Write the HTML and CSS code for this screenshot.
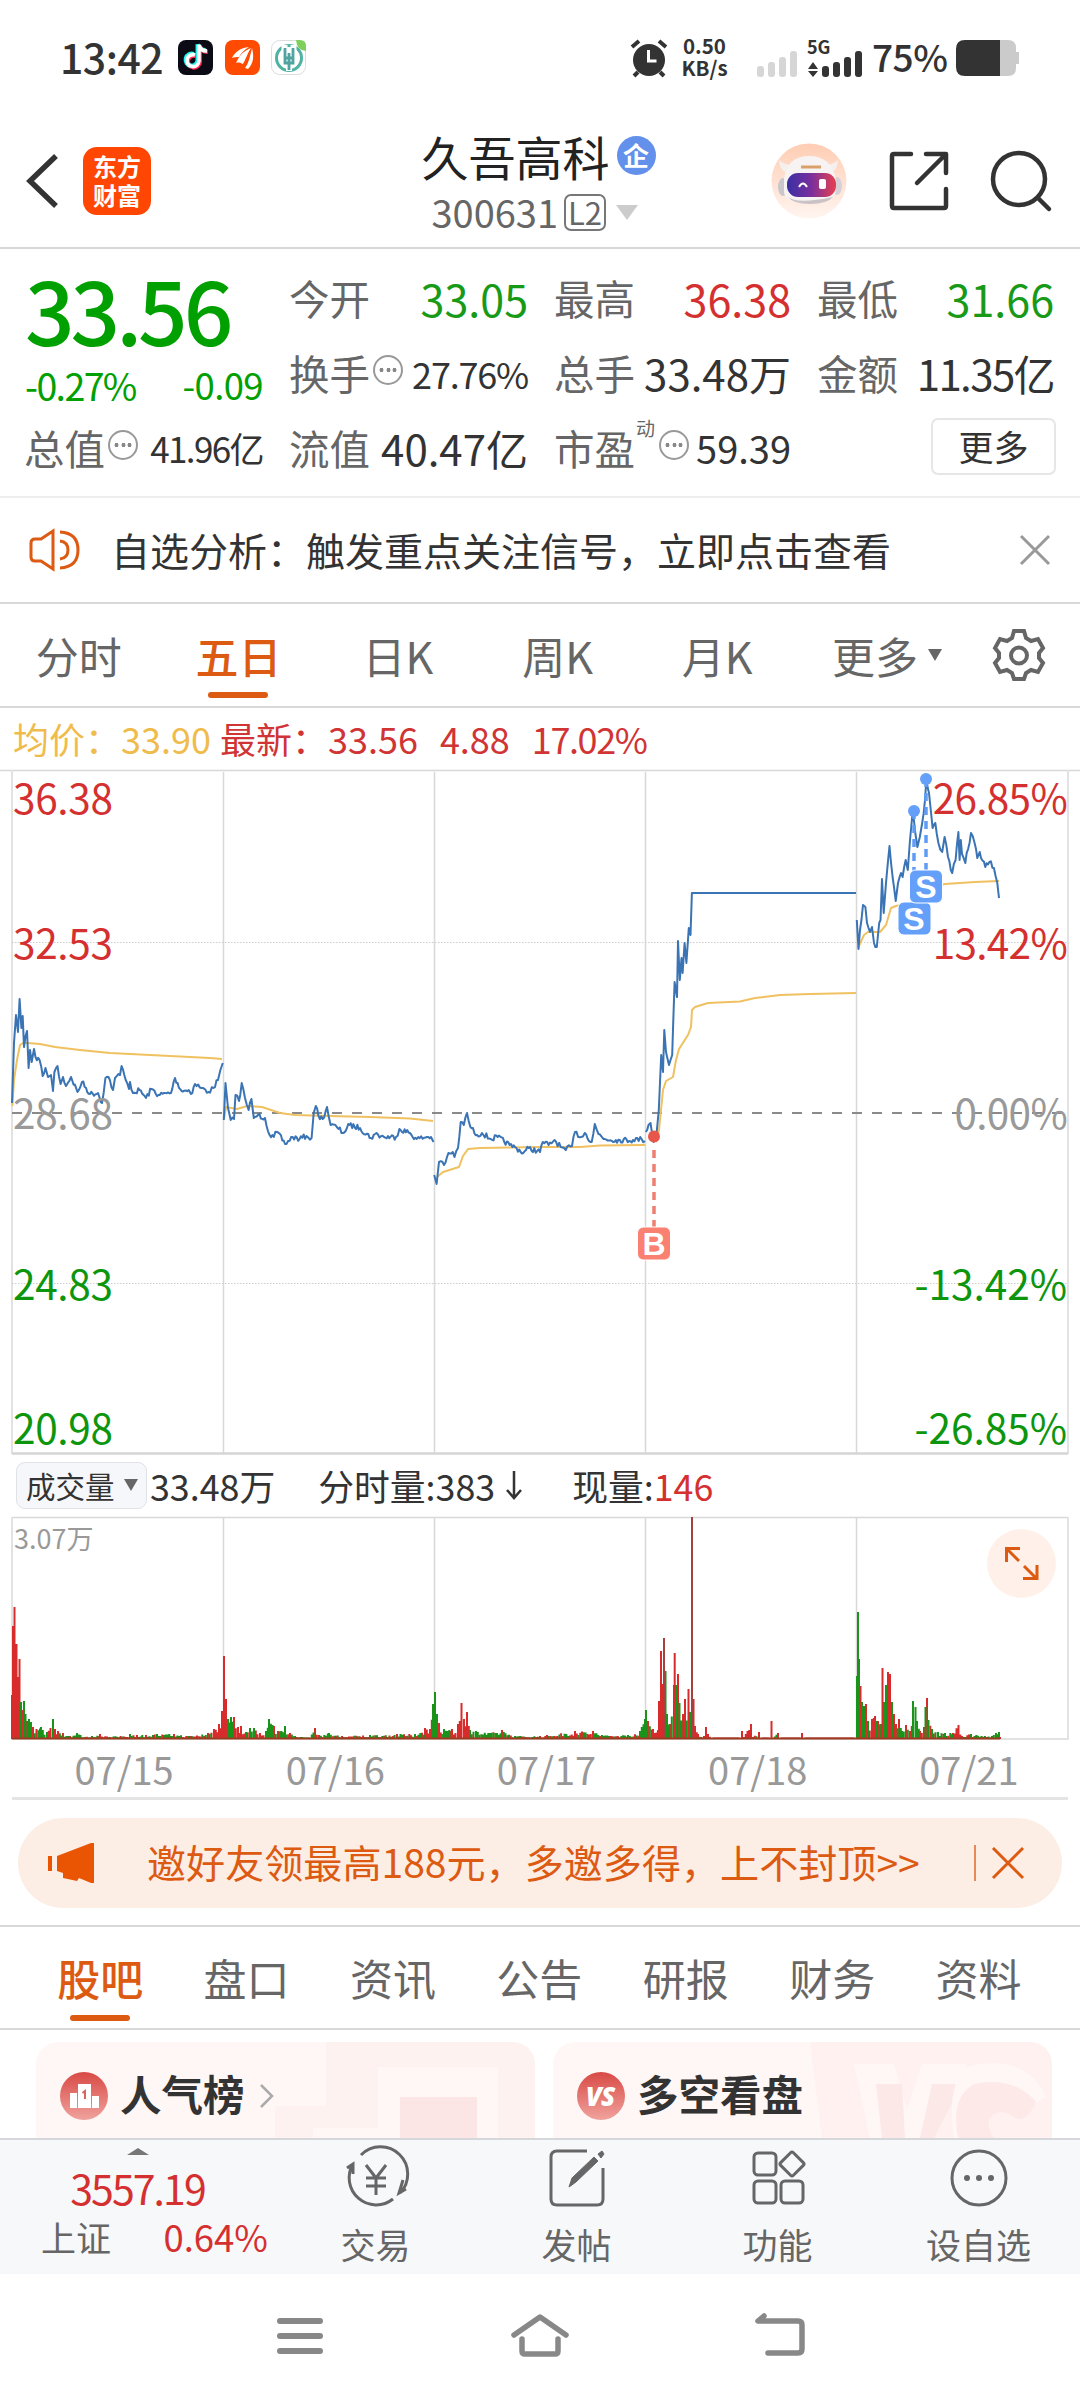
FILE: index.html
```html
<!DOCTYPE html>
<html lang="zh-CN">
<head>
  <meta charset="UTF-8">
  <title>久吾高科 300631</title>
  <link rel="stylesheet" href="styles.css">
</head>
<body>
  <!-- Status bar -->
  <div class="status-bar">
    <div class="clock">13:42</div>
    <svg class="app-icons" width="130" height="36" viewBox="0 0 130 36">
      <rect width="35" height="35" rx="8" fill="#0b0b15"/>
      <g fill="none" stroke-width="4.5">
        <path d="M17 15a6 6 0 1 0 4 6V5c1 4 4 6 8 6" stroke="#fe2c55" transform="translate(.8 .8)"/>
        <path d="M17 15a6 6 0 1 0 4 6V5c1 4 4 6 8 6" stroke="#25f4ee" transform="translate(-1.2 -.8)"/>
        <path d="M17 15a6 6 0 1 0 4 6V5c1 4 4 6 8 6" stroke="#fff" stroke-width="3.6"/>
      </g>
      <rect x="47" width="35" height="35" rx="8" fill="#ff4a02"/>
      <path d="M54 18c3-6 8-10 17-11-5 3-8 6-10 10-3 0-5 0-7 1zM58 23c3-7 7-12 15-15-4 6-5 11-8 16-2-1-5-2-7-1zM67 28c4-5 5-12 7-20 2 8 2 15-4 21z" fill="#fff"/>
      <rect x="93.500" y=".5" width="34" height="34" rx="8" fill="#fff" stroke="#ddd"/>
      <circle cx="111" cy="18" r="12.500" fill="none" stroke="#4fb3a4" stroke-width="3"/>
      <path d="M106.500 5v10h9V5M111 15v16" fill="none" stroke="#fff" stroke-width="6"/>
      <path d="M107 8v15h8V8M111 13v17M107 18h8" fill="none" stroke="#4fa3a0" stroke-width="2.800"/>
      <path d="M118 0h4q6 0 6 6v5q-9 0-10-11z" fill="#7ed05a"/>
    </svg>
    <svg class="alarm" width="38" height="38" viewBox="0 0 38 38">
      <circle cx="19" cy="21" r="16" fill="#333"/>
      <path d="M2 8l7-6M36 8l-7-6M8 33l-4 4M30 33l4 4" stroke="#333" stroke-width="4"/>
      <path d="M18.500 11v11h8" fill="none" stroke="#fff" stroke-width="3"/>
    </svg>
    <div class="net-speed">0.50<br>KB/s</div>
    <svg class="signal" width="108" height="38" viewBox="0 0 108 38">
      <g fill="#d6d6d6">
        <rect x="0" y="27" width="7" height="11" rx="3"/><rect x="11" y="23" width="7" height="15" rx="3"/>
        <rect x="22" y="18" width="7" height="20" rx="3"/><rect x="33" y="12" width="7" height="26" rx="3"/>
      </g>
      <g fill="#333">
        <path d="M51 30l5-7 5 7zM51 32l5 6 5-6z"/>
        <rect x="65" y="27" width="7" height="11" rx="3"/><rect x="76" y="23" width="7" height="15" rx="3"/>
        <rect x="87" y="18" width="7" height="20" rx="3"/><rect x="98" y="12" width="7" height="26" rx="3"/>
      </g>
      <text x="50" y="15" class="net-type">5G</text>
    </svg>
    <div class="battery-text">75%</div>
    <svg class="battery" width="63" height="36" viewBox="0 0 63 36">
      <path d="M44 0h8q8 0 8 8v4h3v12h-3v4q0 8-8 8h-8z" fill="#cbcbcb"/>
      <path d="M44 0H9Q0 0 0 9v18q0 9 9 9h35z" fill="#333"/>
    </svg>
  </div>

  <!-- Header -->
  <div class="header">
    <div class="header-left">
      <svg width="36" height="56" viewBox="0 0 36 56"><path d="M31 3L5 28l26 25" fill="none" stroke="#333" stroke-width="5.500"/></svg>
      <div class="brand">东方<br>财富</div>
    </div>
    <div class="header-title">
      <div class="stock-name">久吾高科<span class="tag-qi">企</span></div>
      <div class="stock-code">300631<span class="tag-l2">L2</span><i class="tri-down"></i></div>
    </div>
    <div class="header-right">
      <svg width="76" height="76" viewBox="0 0 76 76">
        <defs>
          <linearGradient id="peach" x2="0" y2="1"><stop offset="0" stop-color="#ffcdb3"/><stop offset="1" stop-color="#fff5f0"/></linearGradient>
          <linearGradient id="visor"><stop offset="0" stop-color="#3a2fa5"/><stop offset=".5" stop-color="#7a2f9c"/><stop offset="1" stop-color="#e8404f"/></linearGradient>
        </defs>
        <circle cx="38" cy="38" r="37.500" fill="url(#peach)"/>
        <path d="M8 17q1 13 11 13l5-8q-10 1-16-5zM67 17q-1 13-10 13l-5-8q9 1 15-5z" fill="#f5efee"/>
        <ellipse cx="12" cy="44" rx="5" ry="9" fill="#c9c6cc"/><ellipse cx="66" cy="43" rx="5" ry="9" fill="#d5d1d6"/>
        <path d="M13 36Q16 13 38 13t27 23v10q0 14-27 14T13 46z" fill="#f7f3f3"/>
        <path d="M16 53q8 9 46 1-6 7-23 7t-23-8z" fill="#c9c2c6"/>
        <rect x="16" y="30" width="49" height="24" rx="11" fill="url(#visor)"/>
        <path d="M28 44q4-7 8 0" fill="none" stroke="#fff" stroke-width="2"/><rect x="48" y="36" width="7" height="10" rx="2" fill="#fff"/>
        <path d="M30 24h20" stroke="#d9a06a" stroke-width="3"/>
      </svg>
      <svg width="60" height="60" viewBox="0 0 60 60" fill="none" stroke="#333" stroke-width="4.500" stroke-linecap="round" stroke-linejoin="round">
        <path d="M22 3H5q-2 0-2 2v50q0 2 2 2h50q2 0 2-2V38M37 3h20v19M56 4L28 32"/>
      </svg>
      <svg width="60" height="60" viewBox="0 0 60 60" fill="none" stroke="#333" stroke-width="4.500" stroke-linecap="round">
        <circle cx="28" cy="28" r="26"/><path d="M47 47l11 11"/>
      </svg>
    </div>
  </div>

  <!-- Quote -->
  <div class="quote">
    <div class="price-box">
      <div class="price">33.56</div>
      <div class="change"><span>-0.27%</span><span>-0.09</span></div>
    </div>
    <div class="cell"><label>今开</label><b class="green">33.05</b></div>
    <div class="cell"><label>最高</label><b class="red">36.38</b></div>
    <div class="cell"><label>最低</label><b class="green">31.66</b></div>
    <div class="cell"><label>换手</label><i class="info"></i><b class="small">27.76%</b></div>
    <div class="cell"><label>总手</label><b>33.48万</b></div>
    <div class="cell"><label>金额</label><b class="tight">11.35亿</b></div>
    <div class="cell"><label>总值</label><i class="info"></i><b class="small cap">41.96亿</b></div>
    <div class="cell"><label>流值</label><b>40.47亿</b></div>
    <div class="cell"><label>市盈<sup>动</sup></label><i class="info pe"></i><b class="mid">59.39</b></div>
    <div class="cell"><button class="more-btn">更多</button></div>
  </div>

  <!-- Notice -->
  <div class="notice">
    <svg width="52" height="44" viewBox="0 0 52 44" fill="none" stroke="#dc5a12" stroke-width="3">
      <path d="M24 3v38L12 33H6q-4 0-4-4V15q0-4 4-4h6zM31 4q18 1 18 18T31 40M31 13q8 1 8 9t-8 9"/>
    </svg>
    <span>自选分析：触发重点关注信号，立即点击查看</span>
    <svg width="30" height="30" viewBox="0 0 30 30"><path d="M1 1l28 28M29 1L1 29" stroke="#999" stroke-width="3"/></svg>
  </div>

  <!-- Chart tabs -->
  <div class="chart-tabs">
    <div>分时</div>
    <div class="active">五日</div>
    <div>日K</div>
    <div>周K</div>
    <div>月K</div>
    <div class="more-tab">更多<i></i></div>
    <svg width="52" height="52" viewBox="0 0 52 52" fill="none" stroke="#666" stroke-width="4">
      <path d="M21 2h10l2 7 5 3 7-2 5 9-4 5v5l4 5-5 9-7-2-5 3-2 6H21l-2-6-5-3-7 2-5-9 4-5v-5l-4-5 5-9 7 2 5-3z"/><circle cx="26" cy="26.500" r="8"/>
    </svg>
  </div>

  <div class="legend">
    <span class="avg">均价：33.90</span>
    <span>最新：33.56</span>
    <span>4.88</span>
    <span class="pct">17.02%</span>
  </div>

  <!-- Five-day price chart -->
  <svg class="price-chart" width="1080" height="684" viewBox="0 0 1080 684">
    <path class="grid" d="M0 .5H1080M223.500 2V684M434.500 2V684M645.500 2V684M856.500 2V684"/>
    <path class="frame" d="M12 0V684M1068 0V684"/>
    <path d="M12 683.500H1068" stroke="#d5d5d5" stroke-width="2.500"/>
    <path class="dotted" d="M12 172.500H1068M12 513.500H1068"/>
    <path d="M12 343H1068" stroke="#8a8a8a" stroke-width="2" stroke-dasharray="10 10"/>
    <g id="avgLines" class="avg-line"></g>
    <g id="priceLines" class="price-line"></g>
    <g class="axis">
      <text class="up" x="13" y="44">36.38</text>
      <text class="up" x="13" y="189">32.53</text>
      <text class="flat" x="13" y="359">28.68</text>
      <text class="down" x="13" y="530">24.83</text>
      <text class="down" x="13" y="674">20.98</text>
    </g>
    <g class="axis right">
      <text class="up" x="1067" y="44">26.85%</text>
      <text class="up" x="1067" y="189">13.42%</text>
      <text class="flat" x="1067" y="359">0.00%</text>
      <text class="down" x="1067" y="530">-13.42%</text>
      <text class="down" x="1067" y="674">-26.85%</text>
    </g>
    <!-- buy / sell marks -->
    <g class="mark sell">
      <path d="M914 41V132M926 9V100"/>
      <circle cx="914" cy="41" r="6"/><circle cx="926" cy="9" r="6"/>
      <rect x="898" y="132" width="33" height="33" rx="6"/><rect x="909.500" y="100" width="33" height="33" rx="6"/>
      <text x="914" y="160">S</text><text x="926" y="128">S</text>
    </g>
    <g class="mark buy">
      <path d="M654 380V457"/>
      <circle cx="654" cy="366.500" r="6"/>
      <rect x="637.500" y="457" width="33" height="33" rx="6"/>
      <text x="654" y="485">B</text>
    </g>
  </svg>

  <!-- Volume -->
  <div class="volume-head">
    <div class="volume-select">成交量<i></i></div>
    <span class="total">33.48万</span>
    <span class="minute">分时量:383<svg width="18" height="30" viewBox="0 0 18 30"><path d="M9 1v26M2 20l7 8 7-8" fill="none" stroke="#333" stroke-width="2.500"/></svg></span>
    <span>现量:<em>146</em></span>
  </div>
  <svg class="volume-chart" width="1080" height="223" viewBox="0 0 1080 223">
    <path class="grid" d="M12 .5H1068M223.500 0V222M434.500 0V222M645.500 0V222M856.500 0V222"/>
    <path class="frame" d="M12 0V222H1068V0"/>
    <text x="14" y="32" class="vol-max">3.07万</text>
    <g id="volumeBars"></g>
    <circle cx="1021.500" cy="46.500" r="34.500" fill="#fff1e9"/>
    <path d="M1006.500 45V31.500H1020M1007 32l12 12M1037 48V61.500H1023M1036 61l-12-12" fill="none" stroke="#dc5a12" stroke-width="3"/>
  </svg>
  <div class="dates">
    <span>07/15</span><span>07/16</span><span>07/17</span><span>07/18</span><span>07/21</span>
  </div>

  <!-- Invite banner -->
  <div class="banner">
    <svg width="48" height="42" viewBox="0 0 48 42" fill="#ea5504"><path d="M0 14h4v15H0zM9 14L43 1h3v40h-3l-12-5-2 3-14-3V31l-6-2z"/></svg>
    <span>邀好友领最高188元，多邀多得，上不封顶&gt;&gt;</span>
    <i class="divider"></i>
    <svg width="32" height="32" viewBox="0 0 32 32"><path d="M1 1l30 30M31 1L1 31" stroke="#dc5a12" stroke-width="3"/></svg>
  </div>

  <!-- Info tabs -->
  <div class="info-tabs">
    <div class="active">股吧</div>
    <div>盘口</div>
    <div>资讯</div>
    <div>公告</div>
    <div>研报</div>
    <div>财务</div>
    <div>资料</div>
  </div>

  <div class="cards">
    <div class="card">
      <svg class="card-bg" width="260" height="96" viewBox="0 0 260 96">
        <path d="M51 0h209v96H0V64h51z" fill="#fef2f1"/><path d="M103 25h120v71H38V86h65z" fill="#fff7f5"/><path d="M125 55h77v41h-77z" fill="#fce6e5"/>
      </svg>
      <svg width="48" height="48" viewBox="0 0 48 48">
        <defs><linearGradient id="redBall" x2="0" y2="1"><stop offset="0" stop-color="#d84a45"/><stop offset="1" stop-color="#f0a29d"/></linearGradient></defs>
        <circle cx="24" cy="24" r="24" fill="url(#redBall)"/>
        <path d="M10 21h7v15h-7zM18 12h13v24H18zM32 24h7v12h-7z" fill="#fff"/><path d="M22.500 21l2.500-2v8" fill="none" stroke="#d8645f" stroke-width="2"/>
      </svg>
      <h3>人气榜</h3>
      <svg class="chevron" width="16" height="24" viewBox="0 0 16 24"><path d="M2 1l11 11L2 23" fill="none" stroke="#aaa" stroke-width="2.500"/></svg>
    </div>
    <div class="card">
      <svg class="card-bg" width="246" height="96" viewBox="0 0 246 96">
        <path d="M4 0h242v96H16z" fill="#fef1f0"/><path d="M48 22h40l13 44 15-44h45l-34 74H64z" fill="#fff7f5"/><path d="M70 42h26l3 54H76zM126 42h30l-28 54H114z" fill="#fce8e7"/>
        <path d="M160 25q60-15 80 30l-15 10q-10-17-28-15-24 3-24 30v16h-25q-8-50 12-71z" fill="#fff7f5"/>
        <path d="M168 42q40-8 62 18-8 20-20 16-16-12-26 0-4 10 4 20h-36q-8-40 16-54z" fill="#fde9e8"/>
      </svg>
      <svg width="48" height="48" viewBox="0 0 48 48"><circle cx="24" cy="24" r="24" fill="url(#redBall)"/><text x="23" y="34" class="vs">VS</text></svg>
      <h3>多空看盘</h3>
    </div>
  </div>

  <!-- Bottom toolbar -->
  <div class="toolbar">
    <div class="index-box">
      <i class="tri-up"></i>
      <div class="index-value">3557.19</div>
      <div class="index-row"><span>上证</span><em>0.64%</em></div>
    </div>
    <div class="tool">
      <svg width="66" height="60" viewBox="0 0 66 60" fill="none" stroke="#666" stroke-width="3">
        <path d="M18 7a27 27 0 0 1 39 38M60 32l-4 13 7-4M50 51A27 27 0 0 1 10 16M4 20l6-4v10M23 17l10 13 10-13M33 30v17M23 30h20M23 38h20"/>
      </svg>
      <span>交易</span>
    </div>
    <div class="tool">
      <svg width="58" height="60" viewBox="0 0 58 60" fill="none" stroke="#666" stroke-width="3">
        <path d="M39 3H9Q3 3 3 9v42q0 6 6 6h40q6 0 6-6V20"/><path d="M21 39l3-9L46 9l4 4-22 21zM50 6l4-3 2 3-3 4z" fill="#666" stroke-width="1"/>
      </svg>
      <span>发帖</span>
    </div>
    <div class="tool">
      <svg width="54" height="60" viewBox="0 0 54 60" fill="none" stroke="#666" stroke-width="3">
        <rect x="3" y="5" width="22" height="22" rx="4"/><rect x="3" y="33" width="22" height="22" rx="4"/><rect x="30" y="33" width="22" height="22" rx="4"/>
        <rect x="32" y="7" width="18" height="18" rx="2" transform="rotate(45 41 16)"/>
      </svg>
      <span>功能</span>
    </div>
    <div class="tool">
      <svg width="60" height="60" viewBox="0 0 60 60"><circle cx="30" cy="30" r="27" fill="none" stroke="#666" stroke-width="3"/><g fill="#666"><circle cx="18" cy="30" r="3"/><circle cx="30" cy="30" r="3"/><circle cx="42" cy="30" r="3"/></g></svg>
      <span>设自选</span>
    </div>
  </div>

  <!-- System navigation -->
  <div class="sys-nav">
    <svg width="60" height="46" viewBox="0 0 60 46"><path d="M10 8h40M10 23h40M10 38h40" stroke="#888" stroke-width="6" stroke-linecap="round"/></svg>
    <svg width="60" height="46" viewBox="0 0 60 46" fill="none" stroke="#888" stroke-width="5.500" stroke-linecap="round" stroke-linejoin="round"><path d="M4 22L30 4l26 18M12 26v12q0 3 3 3h30q3 0 3-3V26"/></svg>
    <svg width="60" height="46" viewBox="0 0 60 46" fill="none" stroke="#888" stroke-width="5.500" stroke-linecap="round" stroke-linejoin="round"><path d="M15 3L9 8h40q4 0 4 4v24q0 4-4 4H19"/></svg>
  </div>

  <script src="chart.js"></script>
</body>
</html>
```
FILE: styles.css
```css
* { box-sizing: border-box; }

body {
  width: 1080px;
  height: 2400px;
  margin: 0;
  overflow: hidden;
  background: #fff;
  color: #333;
  font-family: "Noto Sans CJK SC", "Noto Sans", sans-serif;
}

i, em { font-style: normal; }
svg { display: block; flex: none; overflow: visible; }

/* status bar */
.status-bar {
  display: flex;
  align-items: center;
  height: 115px;
  padding-left: 60px;
  line-height: 1;
}

.clock {
  width: 118px;
  padding-bottom: 3px;
  font-size: 41px;
  font-weight: 500;
  letter-spacing: -0.5px;
}

.app-icons { margin-right: 322px; }

.net-speed {
  width: 51px;
  margin-left: 11px;
  padding-bottom: 3px;
  font-size: 20.5px;
  line-height: 22px;
  font-weight: 700;
  text-align: center;
}

.signal { margin-left: 27px; }

.net-type {
  font-size: 18px;
  font-weight: 700;
  fill: #333;
}

.battery-text {
  width: 84px;
  margin-left: 7px;
  padding-bottom: 3px;
  font-size: 37px;
  font-weight: 500;
  letter-spacing: -0.5px;
}

/* header */
.header {
  display: flex;
  position: relative;
  justify-content: space-between;
  height: 134px;
  border-bottom: 2px solid #d8d8d8;
}

.header-left {
  display: flex;
  align-items: center;
  gap: 22px;
  padding-left: 25px;
}

.brand {
  width: 68px;
  height: 68px;
  padding-top: 4px;
  border-radius: 14px;
  background: #ff4602;
  color: #fff;
  font-size: 24px;
  line-height: 29px;
  font-weight: 700;
  text-align: center;
}

.header-title {
  display: flex;
  flex-direction: column;
  align-items: flex-start;
  padding: 12px 0 0 155px;
}

.stock-name {
  display: flex;
  align-items: center;
  height: 57px;
  color: #222;
  font-size: 47px;
  line-height: 57px;
}

.tag-qi {
  width: 39px;
  height: 39px;
  margin-left: 7px;
  border-radius: 50%;
  background: #6390ea;
  color: #fff;
  font-size: 26px;
  line-height: 37px;
  font-weight: 700;
  text-align: center;
}

.stock-code {
  display: flex;
  align-items: center;
  margin-left: 10px;
  color: #666;
  font-size: 38px;
  line-height: 56px;
}

.tag-l2 {
  width: 42px;
  height: 37px;
  margin-left: 6px;
  border: 2px solid #777;
  border-radius: 7px;
  font-size: 31px;
  line-height: 31px;
  text-align: center;
}

.tri-down {
  margin-left: 10px;
  border: 11px solid transparent;
  border-top: 15px solid #ccc;
  border-bottom: 0;
}

.header-right {
  display: flex;
  align-items: center;
  gap: 42px;
  padding-right: 29px;
}

/* quote */
.quote {
  display: grid;
  grid-template-columns: 238px 238px 236px 236px;
  grid-template-rows: 75px 75px 74px;
  column-gap: 27px;
  height: 249px;
  padding: 11px 0 0 25px;
  border-bottom: 2px solid #eee;
}

.price-box {
  grid-row: span 2;
  color: #00a000;
}

.price {
  height: 95px;
  margin-top: 1px;
  font-size: 87px;
  line-height: 95px;
  font-weight: 500;
  letter-spacing: -4px;
}

.change {
  display: flex;
  justify-content: space-between;
  margin-top: 4px;
  font-size: 36.5px;
  line-height: 50px;
  letter-spacing: -0.6px;
}

.change span:first-child { letter-spacing: -1.6px; word-spacing: 0; font-size: 37.5px; }

.cell {
  display: flex;
  align-items: center;
  justify-content: space-between;
  margin-left: -1px;
  white-space: nowrap;
}

.cell label {
  position: relative;
  color: #666;
  font-size: 40.5px;
}

.cell b {
  font-size: 42px;
  font-weight: 400;
}

.cell b.green, .cell b.red { font-size: 43px; }

.cell b.small {
  font-size: 36px;
  letter-spacing: -1.2px;
}

.cell b.small.cap { font-size: 35px; letter-spacing: -1.6px; }
.cell b.tight { letter-spacing: -1.6px; }
.cell b.mid { font-size: 38px; }

.cell .green { color: #189a18; }
.cell .red { color: #d53030; }

.cell sup {
  position: absolute;
  top: -4px;
  left: 82px;
  font-size: 19px;
}

.info {
  width: 30px;
  height: 30px;
  margin: -5px auto 0 3px;
  border: 2px solid #999;
  border-radius: 50%;
  background-image:
    radial-gradient(circle, #888 1.8px, transparent 2.2px),
    radial-gradient(circle, #888 1.8px, transparent 2.2px),
    radial-gradient(circle, #888 1.8px, transparent 2.2px);
  background-position: 3px 0, 9.5px 0, 16px 0;
  background-size: 7px 26px;
  background-repeat: no-repeat;
}

.info.pe { margin-left: 24px; }

.more-btn {
  width: 125px;
  height: 57px;
  margin: -2px -2px 0 auto;
  padding: 0;
  border: 2px solid #e6e6e6;
  border-radius: 7px;
  background: #fff;
  color: #333;
  font: 35px/48px "Noto Sans CJK SC", sans-serif;
}

/* notice */
.notice {
  display: flex;
  align-items: center;
  height: 106px;
  padding: 0 30px 0 29px;
  border-bottom: 2px solid #d8d8d8;
  font-size: 39px;
}

.notice span {
  margin: 0 auto 0 30px;
  padding-bottom: 3px;
}

/* chart tabs */
.chart-tabs {
  display: flex;
  align-items: center;
  height: 104px;
  padding-right: 35px;
  border-bottom: 2px solid #d8d8d8;
  color: #666;
  font-size: 43px;
  line-height: 104px;
}

.chart-tabs div {
  position: relative;
  left: -1px;
  width: 159.6px;
  text-align: center;
}

.chart-tabs .more-tab {
  width: 195px;
  padding-left: 35px;
  text-align: left;
}

.more-tab i {
  display: inline-block;
  margin: 0 0 13px 10px;
  border: 7.5px solid transparent;
  border-top: 12px solid #666;
  border-bottom: 0;
}

.chart-tabs .active,
.info-tabs .active {
  color: #dc5a12;
  font-weight: 500;
}

.chart-tabs .active::after,
.info-tabs .active::after {
  content: "";
  position: absolute;
  left: calc(50% - 30px);
  bottom: 9px;
  width: 60px;
  height: 6px;
  border-radius: 3px;
  background: #dc5a12;
}

.info-tabs .active::after { bottom: 7px; }

.legend {
  display: flex;
  height: 62px;
  padding-left: 13px;
  color: #d03434;
  font-size: 36px;
  line-height: 60px;
  white-space: nowrap;
}

.legend span { margin-right: 22px; }

.legend .avg {
  margin-right: 9px;
  color: #efbc4b;
}

.legend .pct { letter-spacing: -1.4px; }

/* price chart */
.grid { stroke: #d8d8d8; stroke-width: 1.5; }
.frame { fill: none; stroke: #e2e2e2; stroke-width: 2; }
.dotted { stroke: #ccc; stroke-dasharray: 1.5 1.5; }

.avg-line, .price-line {
  fill: none;
  stroke-width: 2;
  stroke-linejoin: round;
}

.avg-line { stroke: #f0c160; }
.price-line { stroke: #3a74b4; }

.axis { font-size: 40.5px; letter-spacing: -0.3px; }
.axis.right { text-anchor: end; letter-spacing: -0.7px; }
.axis .up { fill: #d53030; }
.axis .flat { fill: #999; }
.axis .down { fill: #0d960d; }
.axis.right .down { letter-spacing: 0; }

.mark path {
  fill: none;
  stroke-width: 3.5;
  stroke-dasharray: 8 6;
}

.mark rect { stroke: #fff; stroke-width: 1; }
.sell path { stroke: #5f9cf5; }
.sell circle, .sell rect { fill: #64a0fa; }
.buy path { stroke: #f07f72; }
.buy circle { fill: #e8554a; }
.buy rect { fill: #fa8072; }

.mark text {
  font-family: "Liberation Sans", sans-serif;
  font-size: 32px;
  font-weight: 700;
  text-anchor: middle;
  fill: #fff;
}

/* volume */
.volume-head {
  display: flex;
  align-items: center;
  height: 63px;
  padding-left: 16px;
  font-size: 35.8px;
  line-height: 50px;
  white-space: nowrap;
}

.volume-head span { padding-bottom: 2px; }
.volume-head em { color: #d53030; }

.volume-select {
  display: flex;
  align-items: center;
  width: 131px;
  height: 47px;
  padding: 0 0 2px 9px;
  border: 1px solid #e0e2e6;
  border-radius: 9px;
  background: #f6f7fa;
  font-size: 29.5px;
}

.volume-select i {
  margin-left: 9px;
  border: 7.5px solid transparent;
  border-top: 12px solid #666;
  border-bottom: 0;
}

.total { margin: 0 43px 0 3px; }

.minute {
  display: flex;
  align-items: center;
  margin-right: 49px;
}

.minute svg { margin-left: 10px; }

.vol-max { font-size: 27px; fill: #999; }

.dates {
  display: grid;
  grid-template-columns: repeat(5, 1fr);
  height: 60px;
  margin: 0 12px;
  border-bottom: 3px solid #e4e4e4;
  color: #999;
  font-size: 38px;
  line-height: 58px;
  text-align: center;
}

.dates span { padding-left: 13px; }

/* banner */
.banner {
  display: flex;
  align-items: center;
  width: 1044px;
  height: 90px;
  margin: 18px 0 17px 18px;
  padding-left: 30px;
  border-radius: 45px;
  background: #fceee5;
  color: #dc5a12;
  font-size: 39.1px;
  white-space: nowrap;
}

.banner span {
  width: 826px;
  padding: 0 0 4px 51px;
}

.divider {
  width: 2px;
  height: 36px;
  margin-right: 16px;
  margin-left: 52px;
  background: #e58a58;
}

/* info tabs */
.info-tabs {
  display: flex;
  height: 105px;
  padding-left: 27px;
  border-top: 2px solid #d8d8d8;
  border-bottom: 2px solid #d8d8d8;
  color: #666;
  font-size: 43px;
  line-height: 101px;
  text-align: center;
}

.info-tabs div {
  position: relative;
  width: 146.4px;
}

/* cards */
.cards {
  display: flex;
  gap: 18px;
  height: 108px;
  padding: 12px 28px 0 36px;
}

.card {
  display: flex;
  position: relative;
  width: 499px;
  height: 96px;
  padding: 30px 0 0 24px;
  border-radius: 22px 22px 0 0;
  background: #fff7f6;
  overflow: hidden;
}

.card > svg { position: relative; }

.card > .card-bg {
  position: absolute;
  top: 0;
  right: 0;
}

.card h3 {
  position: relative;
  margin: -9px 0 0 12px;
  font-size: 41.5px;
  line-height: 60px;
  font-weight: 700;
}

.card > .chevron { margin: 12px 0 0 14px; }

.vs {
  font-family: "Open Sans", sans-serif;
  font-size: 26px;
  font-weight: 800;
  font-style: italic;
  letter-spacing: -1px;
  text-anchor: middle;
  fill: #fff;
}

/* toolbar */
.toolbar {
  display: flex;
  height: 136px;
  border-top: 2px solid #d5d7da;
  background: #f7f8fa;
}

.index-box {
  width: 275px;
  text-align: center;
  color: #d53030;
}

.tri-up {
  display: block;
  width: 0;
  margin: 8px auto 0;
  border: 11px solid transparent;
  border-bottom: 7px solid #777;
  border-top: 0;
}

.index-value {
  height: 64px;
  font-size: 41px;
  line-height: 64px;
  letter-spacing: -1.9px;
}

.index-row {
  display: flex;
  justify-content: space-between;
  padding: 0 7px 0 41px;
  font-size: 36.5px;
  line-height: 36px;
}

.index-row span { color: #666; font-size: 35px; }

.tool {
  display: flex;
  flex-direction: column;
  align-items: center;
  width: 201px;
  padding-top: 8px;
  color: #666;
  font-size: 35px;
  line-height: 72px;
}

.sys-nav {
  display: flex;
  justify-content: space-between;
  height: 126px;
  padding: 39px 271px 0 270px;
}
```
FILE: chart.js
```js
const SVG_NS = 'http://www.w3.org/2000/svg';

// one string per trading day, "x,y" pairs in chart pixels
const prices = [
  '12,333 14,273 16,245 18,262 19.6,229 21.4,258 22.7,246 24,277 27,261 28.6,298 30,280 31.7,292 34,279 35.5,287 39.6,290 42.7,306 45.5,298 48,307 51,305 53,321 54.4,302 57.5,296 60.6,314 63,307 66,316 71,307 77.5,322 82,312 90,324 98,323 102,333 105.4,308 108.5,307 113,320 115,308 120,305 121.6,296 125.7,310 129,319 130,312 133,323 139.5,320 146,328 151.5,319 158.4,325 171,323 175,308 181.5,321 188.7,320 191,324 195,314 201.4,318 208.3,322 213.5,318 218,310 220.4,300 222.8,293',
  '223.8,350 225.5,313 228,338 230.7,350 234,349 235.5,325 239,331 241.7,313 245,328 248.6,340 251.4,329 253.8,348 258,345 265,348 269.6,365 273.8,367 277,362 285,374 292.7,367 299.6,369 306.5,366 311.6,368 313.7,343 315.8,336 318.5,346 322.7,349 327,337 330.6,355 336.8,357 343,363 349.5,355 360,358 371,368 375,364 384,367 396,367 399.4,359 409.8,363 416.7,369 427,367 431,367 433.5,372',
  '434.2,405 436.6,414 439,392 442.5,392 444,395 447,387 452.8,382 454.5,387 458,378 460.7,352 463.8,355 467,343 470.4,357 477,365 482,363 490.7,369 497.6,367 509.6,375 516.5,378 523.4,383 528.6,378 540,382 542.8,372 548.6,375 554.5,370 560.7,377 565.8,380 572,376 575,362 581,367 584.8,363 591.7,372 594.8,354 598.5,364 603.7,369 615.8,370 633,370 641.6,369 645,371',
  '645.7,362 648.5,355 650.5,353 653.6,372 656.4,365 658.8,340 661.2,285 663,302 664.3,260 666,282 669,295 672.2,285 673.3,250 674.6,212 677,227 678,171 679.8,210 681.5,188 682.6,203 684.6,173 686.4,193 688.8,158 690.5,165 691.9,123 856,123',
  '856.8,150 858.5,179 860,160 863,135 865.4,137 867,153 870,162 872,157 874,173 876.8,177 879.2,153 880.5,150 882,109 883.7,143 886,113 889.5,76 892.6,107 895.7,131 898,113 901,103 902.6,107 905.7,90 907.8,100 910,70 912.6,42 915.3,63 917.4,77 919.8,67 922.2,53 925,30 926.4,9 929,23 931.5,47 932.6,58 935.3,53 938.4,73 942.2,82 944.6,67 948,87 952.2,103 955.6,90 958.4,62 959.6,90 960.8,70 962,84 965.3,93 971,63 974.6,73 977.3,88 979.7,82 985.3,97 989.4,92 993.9,98 997.3,113 999,128'
];

const averages = [
  '12.4,336 14,310 17,290 20,275 23,273 28,273 40,274 55,277 80,280 110,283 150,285 190,287 210,288 222,289',
  '224,349 226,337 237,339 247,336 262,337 280,343 295,345 330,346 370,347 410,348.5 433,351',
  '437,407 443,402 459,397 463,386 468,379 480,378 540,377 580,377 600,375.5 645,375',
  '656,372 659,360 663,320 666,311 673,307 676,290 679,279 688,265 691,257 692,240 695,237 708,233 740,231.5 755,228 780,225 810,224 856,223',
  '858,178 864,165 868,162 880,162 886,155 891,138 896,136 910,133 925,128 930,118 945,114 975,112 999,111'
];

// x, bar height, r = up / g = down
const volumes = [
  '12,44,r 13,113,r 14.5,132,r 16.5,95,r 18,62,r 19.5,80,r 21,37,g 22.5,29,r 24,38,g 25.5,25,g 27,18,r 29,20,g 31,17,g 33,12,r 41,12,g 47,7,g 53,20,g 55,10,r 58,8,r 63,6,r 70,3,r 77,6,g 85,2,g 100,5,r 110,2,r 130,5,g 146,4,r 157,5,g 174,5,r 190,3,r 208,6,r 214,10,r 219,15,r 222,28,r',
  '224,83,r 226,40,r 228,20,g 231,22,g 234,22,r 238,12,r 241,13,r 246,7,g 250,11,g 254,11,g 260,6,r 266,8,g 269,20,g 274,13,r 278,8,r 285,13,g 290,6,r 295,3,g 310,1,g 315,11,r 319,4,r 329,6,g 342,3,r 370,4,g 397,5,r 415,5,g 425,11,r 430,10,r 433,35,g',
  '435,47,g 437,25,g 439,16,r 444,10,g 452,10,r 458,15,r 461.5,36,r 464,20,r 467,27,r 470,9,g 476,8,g 490,6,g 502,9,r 515,3,g 540,3,r 575,8,r 593,8,r 602,4,g 628,4,g 640,8,g 645,20,g',
  '646,29,g 648,18,r 653,10,r 658,9,r 659,38,r 661,88,r 662,55,r 664,101,r 665.5,68,g 667,25,g 670,15,r 674,54,r 674.7,86,r 676,54,g 678,65,r 679.5,36,g 683,25,r 685,40,r 688.5,50,r 690,27,g 692,222,r 693.5,40,r 695,13,r 698,5,r 704,3,r 706,12,r 708,5,r 712,1,r 740,1,r 742,8,r 744,2,r 751,15,r 753,2,r 759,7,r 761,1,r 770,1,r 771.5,18,r 773,1,r 778,6,r 780,1,r 801,1,r 802,6,r 804,1,r 855,1,r',
  '857,63,g 858,127,g 859,80,g 860.5,53,r 862,37,g 864,33,g 866,35,r 868,18,g 872,20,r 875,23,r 878,18,r 881,15,r 882.5,71,r 884,37,g 886,54,g 888,67,r 890,65,r 892,37,g 894,25,r 896,15,r 899,20,r 902,8,g 906,14,r 910,8,r 913,38,g 915.5,32,g 917,18,g 920,8,r 924,12,r 925.5,32,g 927,41,r 928.5,19,g 932,10,g 938,7,g 945,6,g 953,6,r 958.5,14,r 962,3,r 971,5,g 985,3,g 992,3,g 996,6,g 999,7,g 1000,2,r'
];

let seed = 7;
function random() {
  seed = (seed * 16807) % 2147483647;
  return seed / 2147483647;
}

function addPath(parent, d, stroke) {
  const path = document.createElementNS(SVG_NS, 'path');
  path.setAttribute('d', d);
  if (stroke) {
    path.setAttribute('stroke', stroke);
    path.setAttribute('stroke-width', 2);
  }
  parent.appendChild(path);
}

// minute ticks between the key points
function withTicks(day) {
  const pts = day.split(' ').map(p => p.split(',').map(Number));
  const out = [pts[0]];
  for (let i = 1; i < pts.length; i++) {
    const [x0, y0] = pts[i - 1];
    const [x1, y1] = pts[i];
    const steps = x1 - x0 > 100 ? 1 : Math.floor((x1 - x0) / 1.3);
    for (let s = 1; s < steps; s++) {
      const t = s / steps;
      out.push([x0 + (x1 - x0) * t, y0 + (y1 - y0) * t + (random() - 0.5) * 5.5]);
    }
    out.push([x1, y1]);
  }
  return 'M' + out.map(p => p[0].toFixed(1) + ' ' + p[1].toFixed(1)).join('L');
}

function drawVolume() {
  const base = 222;
  const paths = { r: '', g: '' };
  const add = (x, h, c) => { paths[c] += `M${x.toFixed(1)} ${base}v${-h.toFixed(1)}`; };
  volumes.forEach(day => {
    const bars = day.split(' ').map(b => b.split(','));
    bars.forEach((bar, i) => {
      const x = +bar[0], h = +bar[1];
      const next = bars[i + 1];
      if (next) {
        const nx = +next[0], nh = +next[1];
        for (let fx = x + 1.76; fx < nx - 0.8; fx += 1.76) {
          const top = h + (nh - h) * (fx - x) / (nx - x);
          const red = top <= 1 || (bar[2] === 'r' ? random() < 0.6 : random() < 0.3);
          add(fx, Math.max(1.5, top * (0.4 + random() * 0.6)), red ? 'r' : 'g');
        }
      }
      add(x, h, bar[2]);
    });
  });
  const g = document.getElementById('volumeBars');
  addPath(g, paths.r, '#d82c2c');
  addPath(g, paths.g, '#1b931b');
  // the limit-up spike stays on top
  addPath(g, 'M664 222V121M692 222V0', '#a34040');
  addPath(g, 'M12 221.5H1000', '#9a3a20');
}

averages.forEach(day => addPath(document.getElementById('avgLines'), 'M' + day.replace(/ /g, 'L')));
prices.forEach(day => addPath(document.getElementById('priceLines'), withTicks(day)));
drawVolume();
```
